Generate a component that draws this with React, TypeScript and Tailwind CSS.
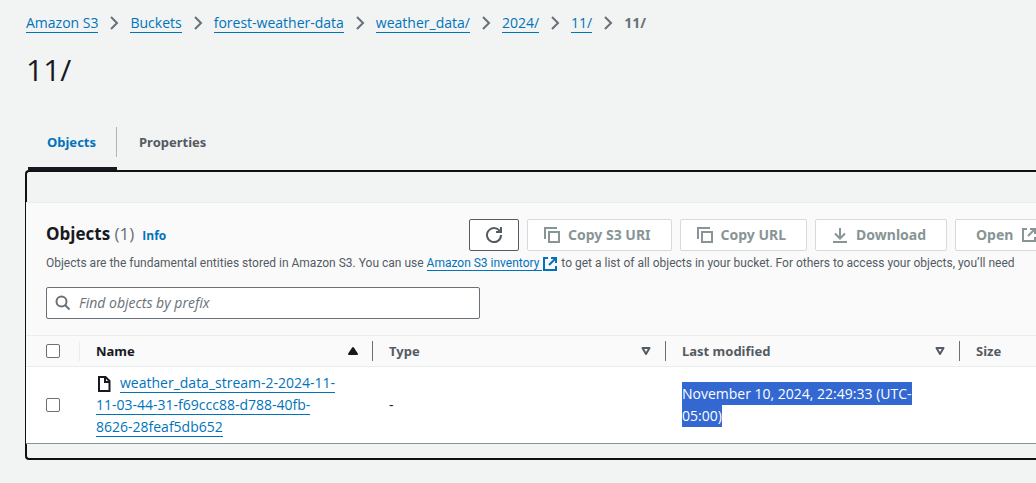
import React from "react";

type IconProps = { className?: string };

function Glyph({ className = "", children }: IconProps & { children: React.ReactNode }) {
  return (
    <svg
      viewBox="0 0 16 16"
      className={`size-4 shrink-0 ${className}`}
      fill="none"
      stroke="currentColor"
      strokeWidth="2"
      aria-hidden="true"
    >
      {children}
    </svg>
  );
}

const ChevronIcon = ({ className }: IconProps) => (
  <Glyph className={className}>
    <path d="m5 2 6 6-6 6" />
  </Glyph>
);

const RefreshIcon = () => (
  <Glyph>
    <path d="M10 5h5V0" />
    <path d="M15 8a7 7 0 1 1-.7-3" />
  </Glyph>
);

const CopyIcon = () => (
  <Glyph>
    <path d="M15 5H5v10h10V5Z" />
    <path d="M13 1H1v11" />
  </Glyph>
);

const DownloadIcon = () => (
  <Glyph>
    <path d="M8 1v10M3 6.500l5 5 5-5M1 15h14" />
  </Glyph>
);

const ExternalIcon = ({ className }: IconProps) => (
  <Glyph className={className}>
    <path d="M9 2h5v5M7 9l7-7" />
    <path d="M14 10v4H2V2h4" />
  </Glyph>
);

const SearchIcon = ({ className }: IconProps) => (
  <Glyph className={className}>
    <circle cx="6.500" cy="6.500" r="5" />
    <path d="m10 10 4.500 4.500" />
  </Glyph>
);

const FileIcon = ({ className }: IconProps) => (
  <Glyph className={className}>
    <path d="M3 1h6.500l4 4v10H3V1Z" />
    <path d="M9 1v5h5" />
  </Glyph>
);

function SortIcon({ active = false }: { active?: boolean }) {
  return (
    <svg viewBox="0 0 16 16" className="size-4 shrink-0" aria-hidden="true" strokeWidth="2" stroke="currentColor" strokeLinejoin="round">
      {active ? <path d="M8 5 4 11h8L8 5Z" fill="currentColor" /> : <path d="M8 11 4.500 5h7L8 11Z" fill="none" />}
    </svg>
  );
}

const link = "border-b border-[#0073bb] text-[#0073bb]";
const label13 = "font-['Noto_Sans',sans-serif] text-[13px] font-bold";

const crumbs = ["Amazon S3", "Buckets", "forest-weather-data", "weather_data/", "2024/", "11/"];

function ActionButton({ className, children }: { className: string; children: React.ReactNode }) {
  return (
    <button
      type="button"
      className={`flex h-8 shrink-0 items-center gap-2 rounded-xs border border-[#d5dbdb] bg-white font-['Noto_Sans',sans-serif] text-[14px] font-bold whitespace-nowrap text-[#879596] ${className}`}
    >
      {children}
    </button>
  );
}

function CheckBox({ label }: { label: string }) {
  return (
    <input
      type="checkbox"
      aria-label={label}
      className="block size-[14px] appearance-none rounded-xs border border-[#687078] bg-white checked:bg-[#0073bb]"
    />
  );
}

function HeaderCell({ label, sort }: { label: string; sort?: "active" | "idle" }) {
  const active = sort === "active";
  return (
    <th scope="col" className={`h-[31px] p-0 text-left ${label13} ${active ? "text-[#16191f]" : "text-[#545b64]"}`}>
      <div className="flex h-5 items-center pl-4">
        <span className="flex-1">{label}</span>
        {sort && (
          <>
            <SortIcon active={active} />
            <span className="ml-[11px] h-5 w-px bg-[#687078]" />
          </>
        )}
      </div>
    </th>
  );
}

export default function App() {
  return (
    <div className="min-h-screen overflow-hidden bg-[#f2f3f3] pb-6 font-['Open_Sans',sans-serif] text-[14px] leading-[22px] text-[#16191f]">
      <nav aria-label="Breadcrumbs" className="px-[26px] pt-3">
        <ol className="flex items-center gap-2">
          {crumbs.map((name) => (
            <li key={name} className="flex items-center gap-2">
              <a href="#" className={`leading-[18px] ${link}`}>
                {name}
              </a>
              <ChevronIcon className="text-[#687078]" />
            </li>
          ))}
          <li className="font-bold text-[#687078]">11/</li>
        </ol>
      </nav>

      <h1 className="mt-[18px] px-[26px] text-[30px] leading-9">11/</h1>

      <div role="tablist" className="mt-[39px] flex pl-7">
        <button
          type="button"
          role="tab"
          aria-selected="true"
          className={`flex h-[43px] items-start border-b-3 border-[#16191f] text-[#0073bb] ${label13}`}
        >
          <span className="flex h-[30px] items-center border-r border-[#aab7b8] pr-5 pl-[19px]">Objects</span>
        </button>
        <button type="button" role="tab" aria-selected="false" className={`flex h-[30px] items-center px-[22px] text-[#545b64] ${label13}`}>
          Properties
        </button>
      </div>

      <section className="ml-[25px] rounded-l-sm border-2 border-r-0 border-[#0f1114] pt-[30px] pb-[14px]">
        <div className="-ml-px border-t border-b border-t-[#eaeded] border-b-[#879596] bg-white">
          <div className="bg-[#fafafa] px-5 pt-4 pb-4">
            <div className="flex items-center gap-2">
              <div className="flex w-[415px] shrink-0 items-baseline gap-2">
                <h2 className="text-[17px] font-bold">
                  Objects <span className="font-normal text-[#687078]">(1)</span>
                </h2>
                <a href="#" className="text-[12px] font-bold text-[#0073bb]">
                  Info
                </a>
              </div>
              <button
                type="button"
                aria-label="Refresh"
                className="flex h-8 w-[50px] shrink-0 items-center justify-center rounded-xs border border-[#545b64] bg-white text-[#545b64]"
              >
                <RefreshIcon />
              </button>
              <ActionButton className="pr-5 pl-4">
                <CopyIcon />
                Copy S3 URI
              </ActionButton>
              <ActionButton className="pr-5 pl-4">
                <CopyIcon />
                Copy URL
              </ActionButton>
              <ActionButton className="pr-5 pl-4">
                <DownloadIcon />
                Download
              </ActionButton>
              <ActionButton className="pr-4 pl-5">
                Open
                <ExternalIcon />
              </ActionButton>
            </div>
            <p className="mt-px font-['Roboto',sans-serif] text-[12px] whitespace-nowrap text-[#545b64]">
              Objects are the fundamental entities stored in Amazon S3. You can use{" "}
              <a href="#" className={link}>
                Amazon S3 inventory{" "}
              </a>
              <ExternalIcon className="inline text-[#0073bb]" /> to get a list of all objects in your bucket. For others to access your
              objects, you’ll need
            </p>
            <label className="mt-[13px] flex h-8 w-[434px] items-center gap-2 rounded-xs border border-[#687078] bg-white px-2 text-[#687078]">
              <SearchIcon />
              <input
                type="search"
                aria-label="Find objects by prefix"
                placeholder="Find objects by prefix"
                className="min-w-0 flex-1 bg-transparent outline-none placeholder:text-[#687078] placeholder:italic"
              />
            </label>
          </div>

          <table className="w-full table-fixed border-collapse">
            <colgroup>
              <col className="w-[54px]" />
              <col className="w-[293px]" />
              <col className="w-[293px]" />
              <col className="w-[294px]" />
              <col />
            </colgroup>
            <thead className="border-y border-[#eaeded] bg-[#fafafa]">
              <tr>
                <th scope="col" className="p-0 pl-5">
                  <div className="flex h-5 items-center border-r border-[#eaeded]">
                    <CheckBox label="Select all objects" />
                  </div>
                </th>
                <HeaderCell label="Name" sort="active" />
                <HeaderCell label="Type" sort="idle" />
                <HeaderCell label="Last modified" sort="idle" />
                <HeaderCell label="Size" />
              </tr>
            </thead>
            <tbody>
              <tr>
                <td className="p-0 pl-5">
                  <CheckBox label="Select object" />
                </td>
                <td className="py-[5px] pr-8 pl-4">
                  <FileIcon className="mr-2 inline" />
                  <a href="#" className={link}>
                    weather_data_stream-2-2024-11-11-03-44-31-f69ccc88-d788-40fb-8626-28feaf5db652
                  </a>
                </td>
                <td className="py-[5px] pl-4">-</td>
                <td className="py-[5px] pr-5 pl-4">
                  <span className="bg-[#3367d1] py-[2px] text-white">November 10, 2024, 22:49:33 (UTC-05:00)</span>
                </td>
                <td />
              </tr>
            </tbody>
          </table>
        </div>
      </section>
    </div>
  );
}
